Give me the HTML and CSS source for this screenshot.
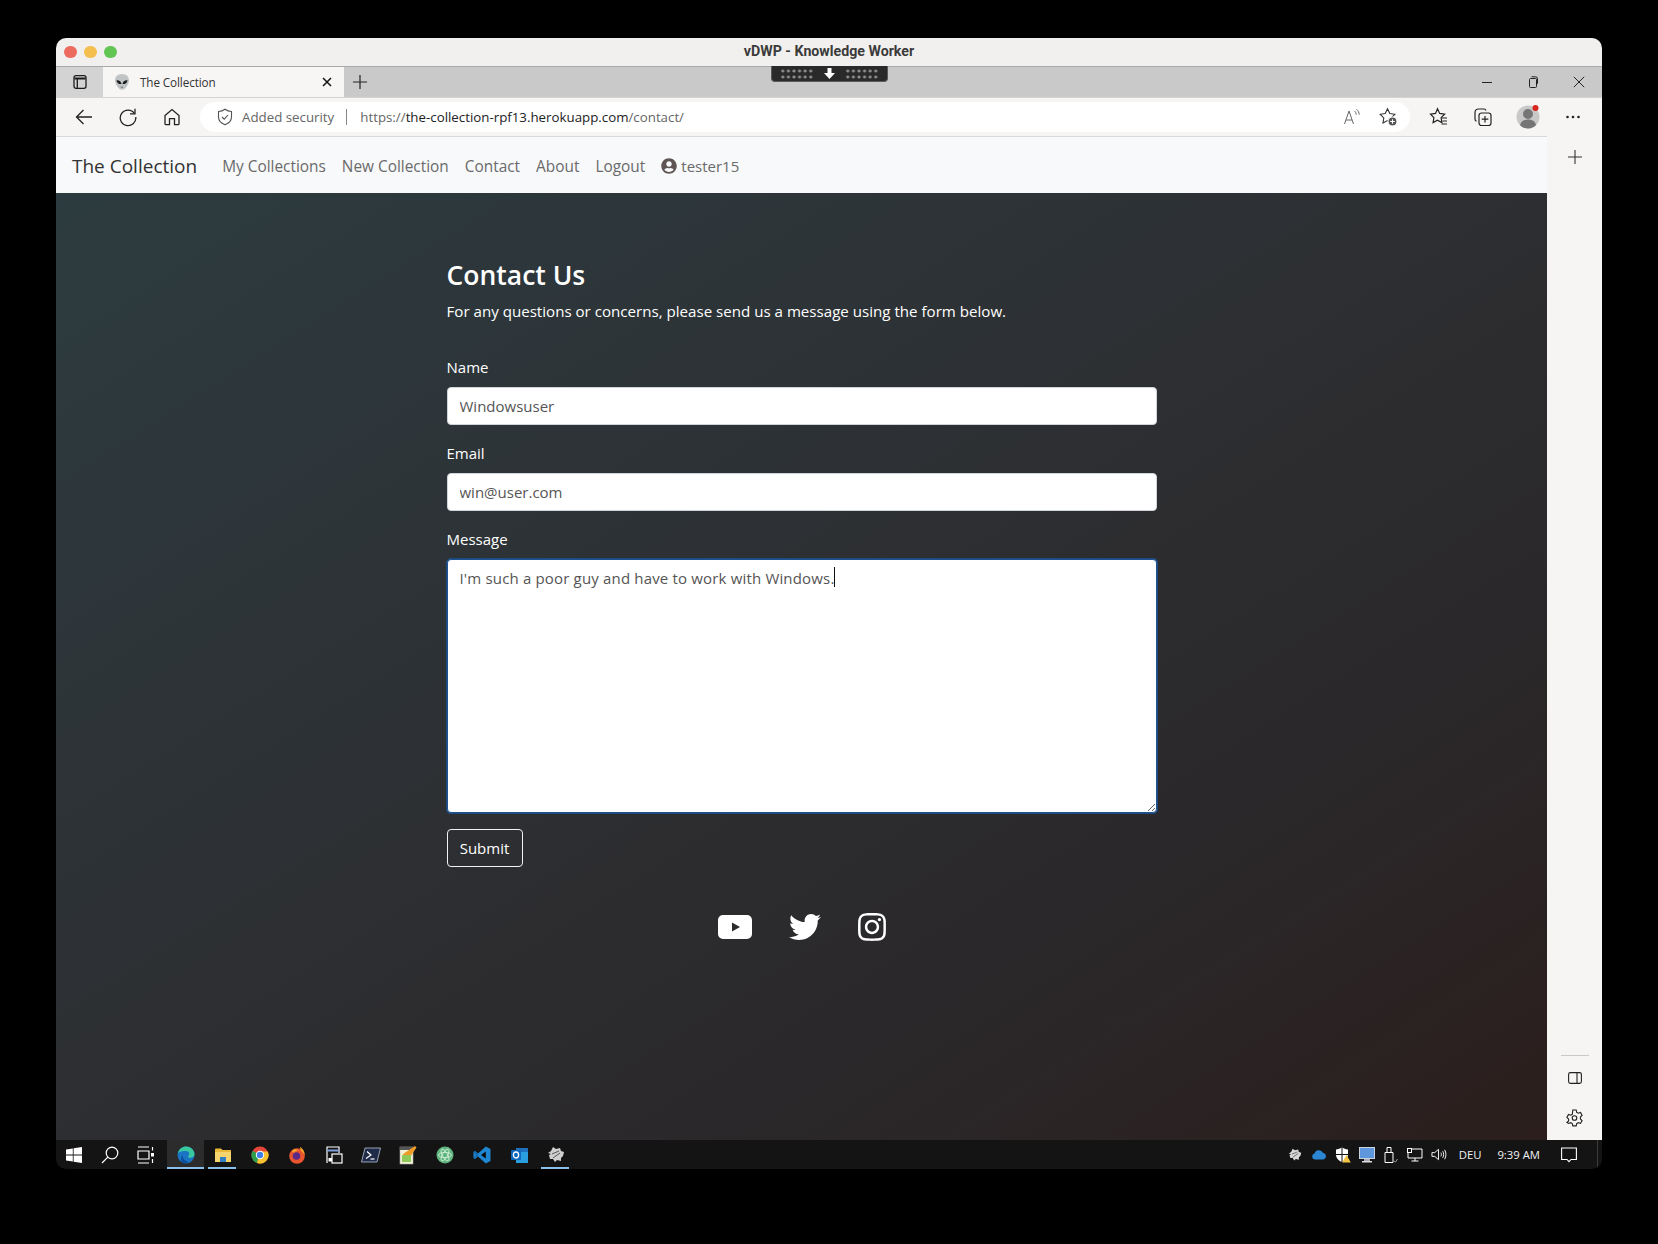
FILE: index.html
```html
<!DOCTYPE html>
<html lang="en">
<head>
<meta charset="utf-8">
<title>vDWP - Knowledge Worker</title>
<link rel="stylesheet" href="styles.css">
</head>
<body>
<div class="window">
  <header class="titlebar">
    <div class="lights"><i class="light red"></i><i class="light yellow"></i><i class="light green"></i></div>
    <div class="wintitle">vDWP - Knowledge Worker</div>
  </header>

  <div class="tabstrip">
    <div class="tabside">
      <svg width="16" height="16" viewBox="0 0 16 16" fill="none" stroke="#1b1b1b" stroke-width="1.3"><rect x="2" y="1.7" width="12" height="12.6" rx="2"/><path d="M2.5 4.6h11" stroke-width="2"/><path d="M5.3 5v9"/></svg>
    </div>
    <div class="tab">
      <svg class="favicon" width="16" height="18" viewBox="0 0 16 18"><path d="M8 1C3.6 1 1 3.800 1 7.200c0 3.800 3.600 9.600 7 9.600s7-5.800 7-9.600C15 3.800 12.400 1 8 1z" fill="#c0c4c4"/><path d="M2.500 7.200c2.600-.3 4.700 1.300 5 3.900-2.600.2-4.700-1.300-5-3.900zM13.500 7.200c-2.600-.3-4.700 1.300-5 3.900 2.600.2 4.700-1.300 5-3.900z" fill="#1c1c1c"/><path d="M6.800 14.200h2.400" stroke="#555" stroke-width=".8"/></svg>
      <span class="tabtitle">The Collection</span>
      <svg class="tabclose" width="10" height="10" viewBox="0 0 10 10" stroke="#111" stroke-width="1.5"><path d="M1 1l8 8M9 1l-8 8"/></svg>
    </div>
    <svg class="newtab" width="16" height="16" viewBox="0 0 16 16" stroke="#222" stroke-width="1.2"><path d="M8 1v14M1 8h14"/></svg>
    <div class="remotebar">
      <i class="dots"></i>
      <svg width="11" height="11" viewBox="0 0 11 11"><path d="M3.500 0h4v5H11L5.500 11 0 5h3.500z" fill="#fff"/></svg>
      <i class="dots"></i>
    </div>
    <div class="wincontrols">
      <svg width="12" height="12" viewBox="0 0 12 12" stroke="#222"><path d="M1 6.500h10"/></svg>
      <svg width="12" height="12" viewBox="0 0 12 12" fill="none" stroke="#222"><rect x="2.500" y="2.500" width="7" height="9" rx="1"/><path d="M4.500 .8h4a2 2 0 0 1 2 2v5"/></svg>
      <svg width="12" height="12" viewBox="0 0 12 12" stroke="#222"><path d="M.8.800l10.400 10.400M11.200.800L.8 11.200"/></svg>
    </div>
  </div>

  <div class="toolbar">
    <div class="navicons">
      <svg width="20" height="20" viewBox="0 0 20 20" fill="none" stroke="#222" stroke-width="1.3"><path d="M18 10H2.500M9.500 3l-7 7 7 7"/></svg>
      <svg width="20" height="20" viewBox="0 0 20 20" fill="none" stroke="#222" stroke-width="1.3"><path d="M16.500 6.500A7.800 7.800 0 1 0 17.800 10"/><path d="M17 1.800v5h-5"/></svg>
      <svg width="20" height="20" viewBox="0 0 20 20" fill="none" stroke="#222" stroke-width="1.3"><path d="M3 8.500L10 2.500l7 6v8.200a1 1 0 0 1-1 1h-3.500v-6h-5v6H4a1 1 0 0 1-1-1z"/></svg>
    </div>
    <div class="addressbar">
      <svg width="16" height="18" viewBox="0 0 16 18" fill="none" stroke="#555" stroke-width="1.1"><path d="M8 1.200c2 1.500 4 2.200 6.500 2.300v5.500c0 3.500-2.700 6.200-6.500 7.800-3.800-1.600-6.500-4.300-6.500-7.800V3.500C4 3.400 6 2.700 8 1.200z"/><path d="M5 9l2.200 2.200L11 7"/></svg>
      <span class="secure">Added security</span>
      <i class="addrdivider"></i>
      <span class="url">https://<b>the-collection-rpf13.herokuapp.com</b>/contact/</span>
      <span class="addrspacer"></span>
      <svg class="readaloud" width="18" height="18" viewBox="0 0 18 18" fill="none" stroke="#666" stroke-width="1"><path d="M1.500 16L6 3l4.500 13M3 12h6"/><path d="M11.500 3c1.200 1 1.700 2.200 1.700 3.700M13.500 1.300c1.800 1.500 2.700 3.300 2.700 5.400"/></svg>
      <svg width="20" height="20" viewBox="0 0 20 20" fill="none" stroke="#333" stroke-width="1.1"><path d="M9.500 1.800l2.300 4.800 5 .7-3.600 3.600.8 5-4.500-2.400-4.500 2.400.8-5L2.200 7.300l5-.7z"/><circle cx="14.500" cy="14.500" r="4.500" fill="#555" stroke="#fff"/><path d="M14.500 12.200v4.600M12.200 14.500h4.600" stroke="#fff"/></svg>
    </div>
    <div class="toolicons">
      <svg width="20" height="20" viewBox="0 0 20 20" fill="none" stroke="#222" stroke-width="1.2"><path d="M8.500 1.800l2.200 4.600 5 .7-3.600 3.500.8 5-4.400-2.400-4.400 2.400.8-5L1.500 7.100l5-.7z"/><path d="M13 11h5M13.500 14h4.500M12.500 17h5.500"/></svg>
      <svg width="20" height="20" viewBox="0 0 20 20" fill="none" stroke="#222" stroke-width="1.2"><rect x="6" y="6" width="12" height="12.500" rx="2.500"/><path d="M12 9v6.500M8.700 12.200h6.600"/><path d="M13 3.500a2.500 2.500 0 0 0-2-1.500H5.500A3.500 3.500 0 0 0 2 5.500V12a2.500 2.500 0 0 0 1.500 2.300"/></svg>
      <svg class="avatar" width="24" height="28" viewBox="0 0 24 28"><circle cx="12" cy="14" r="11.500" fill="#c8c8c8"/><circle cx="12" cy="11" r="5" fill="#757575"/><path d="M4 22c1-4 4-5.500 8-5.500s7 1.500 8 5.500c-2 2.300-5 3.500-8 3.500s-6-1.200-8-3.500z" fill="#757575"/><circle cx="19.500" cy="5" r="3" fill="#d9261c"/></svg>
      <svg class="moredots" width="16" height="4" viewBox="0 0 16 4" fill="#222"><circle cx="2.500" cy="2" r="1.300"/><circle cx="8" cy="2" r="1.300"/><circle cx="13.500" cy="2" r="1.300"/></svg>
    </div>
  </div>

  <div class="content">
    <div class="page">
      <nav class="navbar">
        <a class="brand">The Collection</a>
        <a class="navlink">My Collections</a>
        <a class="navlink">New Collection</a>
        <a class="navlink">Contact</a>
        <a class="navlink">About</a>
        <a class="navlink">Logout</a>
        <a class="navlink user">
          <svg width="16" height="16" viewBox="0 0 496 512" fill="#5f5555"><path d="M248 8C111 8 0 119 0 256s111 248 248 248 248-111 248-248S385 8 248 8zm0 96c48.600 0 88 39.400 88 88s-39.400 88-88 88-88-39.400-88-88 39.400-88 88-88zm0 344c-58.700 0-111.300-26.600-146.500-68.200 18.800-35.400 55.600-59.800 98.500-59.800 2.400 0 4.800.4 7.100 1.100 13 4.200 26.600 6.900 40.900 6.900 14.300 0 28-2.700 40.900-6.900 2.300-.7 4.700-1.100 7.100-1.100 42.900 0 79.700 24.400 98.500 59.800C359.300 421.400 306.700 448 248 448z"/></svg>
          <span class="username">tester15</span>
        </a>
      </nav>
      <main class="main">
        <div class="container">
          <h1 class="heading">Contact Us</h1>
          <p class="lead">For any questions or concerns, please send us a message using the form below.</p>
          <form class="form">
            <div class="field">
              <label class="label" for="name">Name</label>
              <input class="control" id="name" type="text" value="Windowsuser">
            </div>
            <div class="field">
              <label class="label" for="email">Email</label>
              <input class="control" id="email" type="email" value="win@user.com">
            </div>
            <div class="field">
              <label class="label" for="message">Message</label>
              <div class="textwrap">
                <textarea class="control message" id="message">I'm such a poor guy and have to work with Windows.</textarea>
                <i class="caret"></i>
              </div>
            </div>
            <button class="submit" type="button">Submit</button>
          </form>
          <div class="social">
            <svg width="34" height="24" viewBox="0 0 34 24"><path fill="#fff" fill-rule="evenodd" d="M5 0h24a5 5 0 0 1 5 5v14a5 5 0 0 1-5 5H5a5 5 0 0 1-5-5V5a5 5 0 0 1 5-5zm9 7.500v9l8-4.500z"/></svg>
            <svg width="32" height="26" viewBox="0 48 512 416" preserveAspectRatio="none"><path fill="#fff" d="M459.370 151.716c.325 4.548.325 9.097.325 13.645 0 138.720-105.583 298.558-298.558 298.558-59.452 0-114.680-17.219-161.137-47.106 8.447.974 16.568 1.299 25.340 1.299 49.055 0 94.213-16.568 130.274-44.832-46.132-.975-84.792-31.188-98.112-72.772 6.498.974 12.995 1.624 19.818 1.624 9.421 0 18.843-1.300 27.614-3.573-48.081-9.747-84.143-51.980-84.143-102.985v-1.299c13.969 7.797 30.214 12.670 47.431 13.319-28.264-18.843-46.781-51.005-46.781-87.391 0-19.492 5.197-37.360 14.294-52.954 51.655 63.675 129.300 105.258 216.365 109.807-1.624-7.797-2.599-15.918-2.599-24.040 0-57.828 46.782-104.934 104.934-104.934 30.213 0 57.502 12.670 76.670 33.137 23.715-4.548 46.456-13.320 66.599-25.340-7.798 24.366-24.366 44.833-46.132 57.827 21.117-2.273 41.584-8.122 60.426-16.243-14.292 20.791-32.161 39.308-52.628 54.253z"/></svg>
            <svg width="28" height="28" viewBox="0 31 448 450"><path fill="#fff" d="M224.100 141c-63.600 0-114.900 51.300-114.900 114.900s51.300 114.900 114.900 114.900S339 319.500 339 255.900 287.700 141 224.100 141zm0 189.600c-41.100 0-74.700-33.500-74.700-74.700s33.500-74.700 74.700-74.700 74.700 33.500 74.700 74.700-33.600 74.700-74.700 74.700zm146.400-194.300c0 14.900-12 26.800-26.800 26.800-14.900 0-26.800-12-26.800-26.800s12-26.800 26.800-26.800 26.800 12 26.800 26.800zm76.100 27.200c-1.700-35.900-9.900-67.700-36.200-93.900-26.200-26.200-58-34.400-93.900-36.200-37-2.100-147.900-2.100-184.900 0-35.800 1.700-67.600 9.900-93.900 36.100s-34.400 58-36.200 93.900c-2.100 37-2.100 147.900 0 184.900 1.700 35.900 9.900 67.700 36.200 93.900s58 34.400 93.900 36.200c37 2.100 147.900 2.100 184.900 0 35.900-1.700 67.700-9.900 93.900-36.200 26.200-26.200 34.400-58 36.200-93.900 2.100-37 2.100-147.800 0-184.800zM398.800 388c-7.800 19.600-22.900 34.700-42.600 42.600-29.500 11.700-99.500 9-132.100 9s-102.700 2.600-132.100-9c-19.600-7.800-34.700-22.900-42.600-42.600-11.700-29.500-9-99.500-9-132.100s-2.600-102.700 9-132.100c7.800-19.600 22.900-34.700 42.600-42.600 29.500-11.700 99.500-9 132.100-9s102.700-2.600 132.100 9c19.600 7.800 34.700 22.900 42.600 42.600 11.700 29.500 9 99.500 9 132.100s2.700 102.700-9 132.100z"/></svg>
          </div>
        </div>
      </main>
    </div>
    <aside class="sidebar">
      <svg class="sideplus" width="14" height="14" viewBox="0 0 14 14" stroke="#333" stroke-width="1.100"><path d="M7 0v14M0 7h14"/></svg>
      <span class="addrspacer"></span>
      <i class="sidesep"></i>
      <svg class="sidepanel" width="14" height="12" viewBox="0 0 14 12" fill="none" stroke="#222" stroke-width="1.100"><rect x=".6" y=".6" width="12.800" height="10.800" rx="1.800"/><path d="M9 .6v10.800"/></svg>
      <svg class="sidegear" width="17" height="18" viewBox="0 0 17 18" fill="none" stroke="#222" stroke-width="1.100"><path d="M6.800 1h3.400l.5 2.300 1.600.9 2.200-.7 1.600 2.900-1.700 1.600v1.900l1.700 1.600-1.600 2.900-2.200-.7-1.600.9-.5 2.300H6.800l-.5-2.300-1.600-.9-2.200.7L.9 13.500l1.700-1.600V10L.9 8.400l1.600-2.900 2.200.7 1.600-.9z"/><circle cx="8.500" cy="9" r="2.300"/></svg>
    </aside>
  </div>

  <footer class="taskbar">
    <div class="tb-item narrow">
      <svg width="16" height="16" viewBox="0 0 16 16" fill="#fff"><path d="M0 2.400l6.800-1v6.200H0zM7.600 1.300L16 0v7.600H7.600zM0 8.400h6.800v6.200l-6.800-1zM7.600 8.400H16V16l-8.400-1.300z"/></svg>
    </div>
    <div class="tb-item narrow">
      <svg width="18" height="18" viewBox="0 0 18 18" fill="none" stroke="#fff" stroke-width="1.200"><circle cx="11" cy="7" r="5.800"/><path d="M6.800 11.200L1 17"/></svg>
    </div>
    <div class="tb-item narrow taskview">
      <svg width="18" height="18" viewBox="0 0 18 18" fill="none" stroke="#fff" stroke-width="1.200"><path d="M1 1h11M1 17h11M1 5h11v8H1z"/><path d="M15.500 1v3.500M15.500 13v4"/><rect x="14" y="7" width="3" height="3.500" fill="#fff" stroke="none"/></svg>
    </div>
    <div class="tb-item active under">
      <svg width="18" height="18" viewBox="0 0 18 18"><circle cx="9" cy="9" r="8.500" fill="#1b74c4"/><path d="M1 7C2 2.800 5.500.5 9 .5c4.500 0 8.500 3.500 8.500 7.500 0 2.500-2 3.800-4 3.800-1.500 0-2.500-.6-2.500-1.300 0-.5 1.200-1 1.200-2.500C12.200 5.800 10.800 5 9 5 5.500 5 2.500 5.500 1 7z" fill="#39c8a0"/><path d="M6 17.200C3.500 15.500 3.500 11 6 9c-1 3 1.500 6 5.500 6.500-1.500 1.800-3.500 2.400-5.500 1.700z" fill="#0c4f9a"/></svg>
    </div>
    <div class="tb-item under-short">
      <svg width="18" height="16" viewBox="0 0 18 16"><path d="M1 2.500a1 1 0 0 1 1-1h5l1.500 1.500H17v2H1z" fill="#e9b93b"/><rect x="1" y="5" width="16" height="10" fill="#f7d56e"/><rect x="6" y="10" width="6" height="5" fill="#2f7fc1"/></svg>
    </div>
    <div class="tb-item">
      <svg width="18" height="18" viewBox="0 0 18 18"><circle cx="9" cy="9" r="8.500" fill="#e6463a"/><path d="M9 9L1.600 4.700A8.500 8.500 0 0 0 6 17.100z" fill="#2e9e4d"/><path d="M9 5.500h7.700A8.500 8.500 0 0 1 6 17.100z" fill="#f6c230"/><circle cx="9" cy="9" r="4.200" fill="#fff"/><circle cx="9" cy="9" r="3.200" fill="#3f7fe6"/></svg>
    </div>
    <div class="tb-item">
      <svg width="18" height="18" viewBox="0 0 18 18"><circle cx="9" cy="10" r="7.800" fill="#e8552f"/><path d="M12 .8c3 2.200 5 5 4.800 9-.8-2.500-2.500-4-4-5-.3-1.500-.5-2.700-.8-4z" fill="#f8a72a"/><circle cx="8.500" cy="10" r="3.800" fill="#5b2a86"/><path d="M4 5c2-2 4-2 6-1-1 1-3 1-3.500 2.500C5.500 6.500 4.500 6 4 5z" fill="#f8a72a"/></svg>
    </div>
    <div class="tb-item">
      <svg width="18" height="18" viewBox="0 0 18 18" fill="none" stroke="#fff" stroke-width="1.200"><path d="M2 17V1h12v6"/><path d="M2 4.500h12" stroke="#7da0d8" stroke-width="2"/><rect x="7" y="8" width="10" height="9" fill="#171717"/><rect x="3.500" y="12" width="3.500" height="3.500" fill="#fff" stroke="none"/></svg>
    </div>
    <div class="tb-item">
      <svg width="20" height="16" viewBox="0 0 20 16"><path d="M4 1h15.500l-3.500 14H.5z" fill="#1f2b48" stroke="#b8c2d6" stroke-width=".8"/><path d="M6 4.500l4 3.500-5 3.500" fill="none" stroke="#fff" stroke-width="1.200"/><path d="M9.500 12h4" stroke="#fff" stroke-width="1.200"/></svg>
    </div>
    <div class="tb-item">
      <svg width="18" height="20" viewBox="0 0 18 20"><rect x="1" y="2" width="13" height="17" fill="#f3f2d5" stroke="#aaa" stroke-width=".6"/><rect x="1" y="2" width="13" height="3" fill="#555"/><path d="M4 9l12-8 1.500 1.500-8 12-4 1z" fill="#ee9c28"/><rect x="3" y="10" width="9" height="7" fill="#8fc95a"/></svg>
    </div>
    <div class="tb-item">
      <svg width="18" height="18" viewBox="0 0 18 18"><circle cx="9" cy="9" r="8.500" fill="#5fb57e"/><g fill="none" stroke="#d9f1df" stroke-width=".8"><ellipse cx="9" cy="9" rx="6.500" ry="2.600"/><ellipse cx="9" cy="9" rx="6.500" ry="2.600" transform="rotate(60 9 9)"/><ellipse cx="9" cy="9" rx="6.500" ry="2.600" transform="rotate(120 9 9)"/></g></svg>
    </div>
    <div class="tb-item">
      <svg width="18" height="18" viewBox="0 0 18 18"><path d="M12.800.5L17.500 3v12l-4.700 2.500L5 10.500 2 13 .5 12V6L2 5l3 2.500z" fill="#1f86d1"/><path d="M12.800 5.500L8 9l4.800 3.500z" fill="#0a0a0a"/><path d="M.5 6L2 5l3 2.500V10.500L2 13 .5 12 3 9z" fill="#156aae"/></svg>
    </div>
    <div class="tb-item">
      <svg width="18" height="18" viewBox="0 0 18 18"><rect x="6" y="2" width="12" height="15" fill="#2a9fe0"/><rect x="6" y="2" width="12" height="4" fill="#2070c0"/><rect x="1" y="4" width="10" height="10" rx="1" fill="#0f66bd"/><ellipse cx="6" cy="9" rx="2.600" ry="3" fill="none" stroke="#fff" stroke-width="1.300"/></svg>
    </div>
    <div class="tb-item under-short">
      <svg width="18" height="18" viewBox="0 0 18 18"><path d="M1 7l3-2 2-4 3 2 4-1 1 3 3 1-1 4-2 2 0 3-4-1-2 2-2-3-3 0-1-4 2-1z" fill="#cfcfcf"/><path d="M5 8l7-3M6 12l7-5" stroke="#555"/></svg>
    </div>
    <span class="addrspacer"></span>
    <div class="tray">
      <svg width="16" height="14" viewBox="0 0 18 18"><path d="M1 7l3-2 2-4 3 2 4-1 1 3 3 1-1 4-2 2 0 3-4-1-2 2-2-3-3 0-1-4 2-1z" fill="#d6d6d6"/><path d="M5 8l7-3M6 12l7-5" stroke="#555"/></svg>
      <svg width="16" height="11" viewBox="0 0 16 11"><path d="M3.800 10.500A3 3 0 0 1 3.500 4.600 4.500 4.500 0 0 1 11.900 3.700 3.500 3.500 0 0 1 12.500 10.500z" fill="#2b87d3"/></svg>
      <svg width="16" height="16" viewBox="0 0 16 16"><path d="M7 .5c2 1.200 3.800 1.800 6 2v5c0 3.500-2.500 6-6 7.500C3.500 13.500 1 11 1 7.500v-5c2.200-.2 4-.8 6-2z" fill="#fff"/><path d="M7 .5v15M1 7.500h12" stroke="#111"/><path d="M11.500 8l4.300 7.500H7.200z" fill="#f4c542"/></svg>
      <svg width="16" height="16" viewBox="0 0 16 16"><rect x=".5" y=".5" width="15" height="11" fill="#5e97dc" stroke="#c9d1db"/><rect x="5" y="12" width="6" height="2" fill="#aab"/><rect x="3" y="14" width="10" height="1.500" fill="#ddd"/></svg>
      <svg width="16" height="16" viewBox="0 0 16 16" fill="none" stroke="#fff"><path d="M2 5.500h8v10H2zM4 5.500V.5h4v5"/><path d="M11 14l1.500 1 2-3" stroke="#999"/></svg>
      <svg width="16" height="14" viewBox="0 0 16 14" fill="none" stroke="#fff"><path d="M4 1h11v9H1V5M8 10v3M4.500 13h7"/><rect x=".5" y=".5" width="4" height="4"/></svg>
      <svg width="16" height="13" viewBox="0 0 17 13" fill="none" stroke="#fff"><path d="M1 4.500h3L8 1v11L4 8.500H1zM10.500 4.500c.7 1.200.7 2.800 0 4M12.500 3c1.200 2 1.200 5 0 7M14.500 1.500c1.800 3 1.800 7 0 10"/></svg>
      <span class="traytext lang">DEU</span>
      <span class="traytext clock">9:39 AM</span>
      <svg class="actioncenter" width="16" height="16" viewBox="0 0 16 16" fill="none" stroke="#fff" stroke-width="1.100"><path d="M.6 1h14.800v11.500H10L8 14.700 6 12.500H.6z"/></svg>
    </div>
  </footer>
</div>
</body>
</html>
```
FILE: styles.css
```css
* { box-sizing: border-box; }
html, body { margin: 0; height: 100%; }
body {
  background: #000;
  padding: 38px 56px 75px;
  font-family: "Open Sans", "Noto Sans", sans-serif;
  overflow: hidden;
}
svg { display: block; flex: none; }

.window {
  width: 1546px;
  height: 1131px;
  border-radius: 10px;
  overflow: hidden;
  display: flex;
  flex-direction: column;
  position: relative;
}

/* mac title bar */
.titlebar {
  height: 28px;
  padding-bottom: 2px;
  background: #f1f0ee;
  display: flex;
  align-items: center;
  position: relative;
  flex: none;
}
.lights { display: flex; gap: 7.500px; padding-left: 8px; position: relative; top: 1px; }
.light { width: 12.500px; height: 12.500px; border-radius: 50%; display: block; }
.red { background: #ec6a5e; }
.yellow { background: #f4bf4f; }
.green { background: #61c554; }
.wintitle {
  position: absolute;
  left: 0; right: 0;
  text-align: center;
  font: 700 14.200px Roboto, sans-serif;
  color: #3a3a3a;
}

/* tab strip */
.tabstrip {
  height: 31px;
  flex: none;
  background: #c9c9c9;
  border-top: 1px solid #a9a9a9;
  display: flex;
  align-items: center;
  position: relative;
}
.tabside {
  width: 47px;
  align-self: stretch;
  background: #d3d3d3;
  display: flex;
  align-items: center;
  justify-content: center;
}
.tab {
  width: 241px;
  align-self: stretch;
  background: #f7f6f5;
  display: flex;
  align-items: center;
  padding: 0 12px 0 11px;
}
.tabtitle { font-size: 11.700px; color: #333; margin: 0 0 1px 10px; flex: 1; letter-spacing: -.1px; }
.newtab { margin-left: 8px; }
.remotebar {
  position: absolute;
  left: 715px;
  top: -1px;
  width: 117px;
  height: 16px;
  background: #2a2a2a;
  border: 1px solid #5a5a5a;
  border-top: 0;
  border-radius: 0 0 4px 4px;
  display: flex;
  align-items: center;
  justify-content: center;
  gap: 10px;
}
.dots {
  width: 34px;
  height: 12px;
  background-image: radial-gradient(circle, #8d8d8d 0 1.200px, transparent 1.800px);
  background-size: 5.600px 6px;
  display: block;
}
.wincontrols {
  margin-left: auto;
  display: flex;
  align-items: center;
  gap: 34px;
  padding-right: 17px;
}

/* toolbar */
.toolbar {
  height: 39px;
  padding-bottom: 1px;
  flex: none;
  background: #f6f5f4;
  display: flex;
  align-items: center;
  border-top: 1px solid #d4d4d4;
}
.navicons { display: flex; gap: 24px; padding-left: 18px; width: 144px; }
.addressbar {
  width: 1210px;
  height: 30px;
  background: #fff;
  border-radius: 15px;
  display: flex;
  align-items: center;
  padding: 0 12px 0 17px;
  font-size: 13.300px;
}
.secure { color: #666; margin-left: 9px; }
.addrdivider { width: 1px; height: 16px; background: #888; margin: 0 13px 0 12px; display: block; }
.url { color: #666; }
.url b { font-weight: 400; color: #222; }
.addrspacer { flex: 1; }
.readaloud { margin-right: 17px; }
.toolicons { display: flex; align-items: center; padding-left: 19px; gap: 24px; }
.avatar { margin-left: -1px; }
.moredots { margin-left: 1px; }

/* content */
.content { flex: 1; display: flex; min-height: 0; }
.page { flex: 1; display: flex; flex-direction: column; min-width: 0; }
.navbar {
  height: 57px;
  flex: none;
  background: #f8f9fa;
  border-top: 1px solid #d8d8d8;
  display: flex;
  align-items: center;
  padding: 2px 0 0 16px;
  gap: 16px;
  font-size: 15.400px;
}
.brand { font-size: 19px; color: #333; margin-right: 9px; }
.navlink { color: #6a6a6a; display: flex; align-items: center; gap: 4px; }
.username { font-size: 15px; }
.main {
  flex: 1;
  background: linear-gradient(to bottom right, #2c3b3f 0%, #2d3539 25%, #2d2e31 50%, #2a2729 75%, #2b1e1c 100%);
}
.container { width: 710px; margin: 0 auto; padding-top: 65px; }
.heading { margin: 0 0 7px; font-size: 26.500px; font-weight: 600; line-height: 34px; color: #fff; }
.lead { margin: 0 0 32px; font-size: 15.120px; line-height: 24px; color: #fff; }
.form { display: flex; flex-direction: column; gap: 16px; align-items: flex-start; }
.field { width: 100%; display: flex; flex-direction: column; gap: 8px; }
.label { font-size: 15px; line-height: 24px; color: #fff; }
.control {
  display: block;
  width: 100%;
  height: 38px;
  padding: 6px 12px;
  font: 15px/24px "Open Sans", sans-serif;
  color: #555;
  background: #fff;
  border: 1px solid #ced4da;
  border-radius: 4px;
  outline: none;
}
.textwrap { position: relative; }
.message {
  height: 254px;
  resize: vertical;
  letter-spacing: .17px;
  border-color: #1d5190;
  box-shadow: 0 0 0 1px #1d4a80;
}
.caret {
  position: absolute;
  left: 387px;
  top: 8px;
  width: 1px;
  height: 20px;
  background: #111;
}
.submit {
  height: 38px;
  width: 76px;
  padding: 0;
  background: transparent;
  border: 1px solid #f2f2f2;
  border-radius: 4px;
  color: #fff;
  font: 15px "Open Sans", sans-serif;
}
.social {
  display: flex;
  justify-content: center;
  align-items: center;
  gap: 37px;
  margin-top: 46px;
}

/* sidebar */
.sidebar {
  width: 55px;
  flex: none;
  background: #f6f5f4;
  display: flex;
  flex-direction: column;
  align-items: center;
  padding: 14px 0 13px;
}
.sidesep { width: 28px; height: 1px; background: #c9c9c9; display: block; margin-bottom: 16px; }
.sidegear { margin-top: 25px; }

/* taskbar */
.taskbar {
  height: 29px;
  flex: none;
  background: #141414;
  display: flex;
  align-items: center;
  color: #fff;
}
.tb-item {
  width: 37px;
  align-self: stretch;
  display: flex;
  align-items: center;
  justify-content: center;
  position: relative;
}
.narrow { width: 36px; }
.taskview { margin-right: 3px; }
.active { background: #2c2c2c; }
.under::after,
.under-short::after {
  content: "";
  position: absolute;
  left: 0; right: 0; bottom: 0;
  height: 2px;
  background: #8cc0e8;
}
.under-short::after { left: 4px; right: 5px; }
.tray {
  display: flex;
  align-items: center;
  align-self: stretch;
  gap: 8px;
  padding-right: 20px;
  margin-right: 4px;
  border-right: 1px solid #3c3c3c;
}
.traytext { font-size: 11.300px; color: #f2f2f2; }
.lang { margin-left: 4px; }
.clock { margin-left: 8px; }
.actioncenter { margin-left: 13px; }
```
